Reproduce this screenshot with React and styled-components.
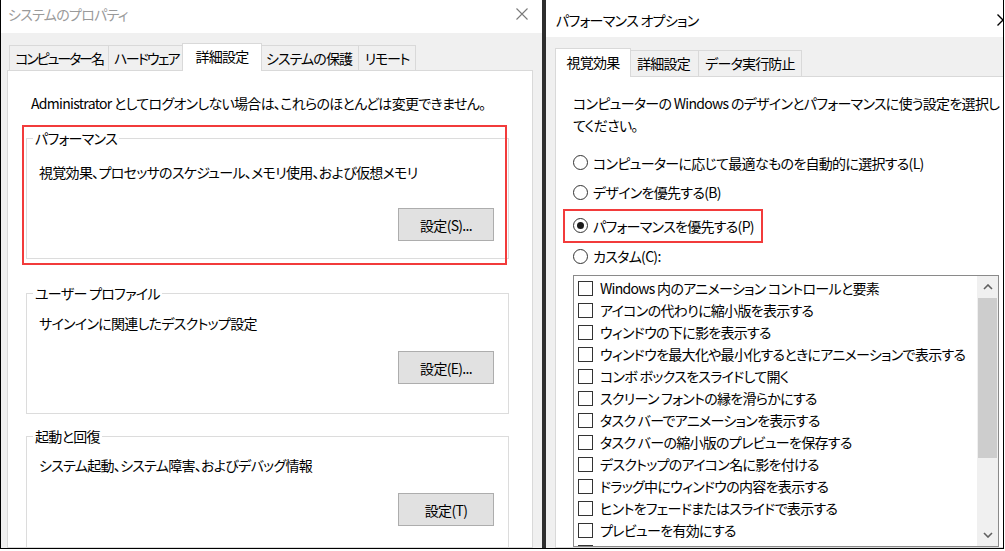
import React from 'react';
import styled, { createGlobalStyle } from 'styled-components';

const Global = createGlobalStyle`
  html, body { margin: 0; padding: 0; background: #fff; }
  body {
    font-family: "Noto Sans CJK JP", sans-serif;
    font-size: 14px;
    letter-spacing: -0.7px;
    color: #000;
    font-feature-settings: "palt";
  }
  #root { width: 1005px; height: 551px; overflow: hidden; }
  * { box-sizing: border-box; }
`;

const Screen = styled.div`
  width: 1005px;
  height: 551px;
  background: #fff;
`;

const Frame = styled.div`
  display: flex;
  width: 1004px;
  height: 549px;
  border-left: 1px solid #000;
  border-right: 1px solid #000;
  border-bottom: 1px solid #000;
  overflow: hidden;
`;

const Window = styled.div`
  display: flex;
  flex-direction: column;
  width: ${p => p.$w}px;
  flex-shrink: 0;
  height: 100%;
  background: #f0f0f0;
  overflow: hidden;
`;

const Divider = styled.div`
  width: 4px;
  flex-shrink: 0;
  background: #2e2e2e;
`;

const TitleBar = styled.div`
  height: ${p => p.$h}px;
  flex-shrink: 0;
  background: #fff;
  display: flex;
  align-items: flex-start;
  justify-content: space-between;
  padding: ${p => p.$pt}px ${p => p.$pr}px 0 ${p => p.$pl}px;
`;

const Title = styled.div`
  font-size: 14px;
  line-height: 20px;
  color: ${p => (p.$inactive ? '#9a9a9a' : '#000')};
`;

const CloseBox = styled.div`
  width: 20px;
  height: 20px;
  margin-right: ${p => p.$mr || 0}px;
  display: flex;
  align-items: center;
  justify-content: center;
  flex-shrink: 0;
`;

const Body = styled.div`
  flex: 1;
  display: flex;
  flex-direction: column;
  padding: ${p => p.$pt}px 0 0 ${p => p.$pl}px;
  min-height: 0;
`;

const TabRow = styled.div`
  display: flex;
  align-items: flex-end;
  height: ${p => p.$h}px;
  flex-shrink: 0;
  padding-left: ${p => p.$pl || 0}px;
`;

const Tab = styled.div`
  position: relative;
  width: ${p => p.$w}px;
  height: ${p => (p.$active ? p.$h + 3 : p.$h)}px;
  line-height: ${p => (p.$active ? p.$h : p.$h - 1)}px;
  text-align: center;
  margin-left: ${p => p.$ml}px;
  margin-bottom: ${p => (p.$active ? -1 : 0)}px;
  background: ${p => (p.$active ? '#fff' : '#f0f0f0')};
  border: 1px solid #d9d9d9;
  border-bottom: none;
  z-index: ${p => (p.$active ? 2 : 1)};
  white-space: nowrap;
  font-size: 14px;
  letter-spacing: ${p => p.$ls}px;
  flex-shrink: 0;
`;

const Panel = styled.div`
  flex: 1;
  width: ${p => p.$w}px;
  flex-shrink: 0;
  background: #fff;
  border: 1px solid #d9d9d9;
  padding: ${p => p.$pt}px 0 0 ${p => p.$pl}px;
  display: flex;
  flex-direction: column;
  min-height: 0;
  overflow: hidden;
`;

const Para = styled.p`
  margin: 0;
  padding-left: ${p => p.$pl || 0}px;
  line-height: 22px;
  white-space: nowrap;
`;

const GroupWrap = styled.div`
  position: relative;
  margin-top: ${p => p.$mt}px;
  width: 483px;
  flex-shrink: 0;
`;

const Group = styled.fieldset`
  margin: 0;
  width: 483px;
  border: 1px solid #dcdcdc;
  padding: ${p => p.$pt}px 14px ${p => p.$pb}px 12px;
  min-width: 0;
`;

const Legend = styled.legend`
  margin-left: -6px;
  padding: 0 2px;
  line-height: 22px;
  font-size: 14px;
`;

const ButtonRow = styled.div`
  display: flex;
  justify-content: flex-end;
  margin-top: ${p => p.$mt}px;
`;

const Button = styled.div`
  width: 96px;
  height: 33px;
  background: #e1e1e1;
  border: 1px solid #adadad;
  display: flex;
  align-items: center;
  justify-content: center;
  font-size: 14px;
`;

const Annotation = styled.div`
  position: absolute;
  left: ${p => p.$l}px;
  top: ${p => p.$t}px;
  width: ${p => p.$w}px;
  height: ${p => p.$h}px;
  border: 2px solid #f23b3b;
  pointer-events: none;
`;

const RadioRow = styled.div`
  position: relative;
  display: flex;
  align-items: center;
  gap: 5px;
  height: 22px;
  margin-top: ${p => p.$mt}px;
  white-space: nowrap;
`;

const RadioCircle = styled.span`
  width: 15px;
  height: 15px;
  border-radius: 50%;
  border: 1px solid #333;
  background: #fff;
  display: flex;
  align-items: center;
  justify-content: center;
  flex-shrink: 0;
  &::after {
    content: '';
    width: 7px;
    height: 7px;
    border-radius: 50%;
    background: ${p => (p.$checked ? '#1a1a1a' : 'transparent')};
  }
`;

const ListBox = styled.div`
  margin-top: ${p => p.$mt}px;
  width: 426px;
  height: 272px;
  flex-shrink: 0;
  border: 1px solid #8a8a8a;
  background: #fff;
  display: flex;
`;

const List = styled.div`
  flex: 1;
  padding: 1px 0 0 4px;
  overflow: hidden;
`;

const CheckRow = styled.div`
  display: flex;
  align-items: center;
  gap: 7px;
  height: 22px;
  white-space: nowrap;
`;

const CheckBox = styled.span`
  width: 15px;
  height: 15px;
  border: 1px solid #333;
  background: #fff;
  flex-shrink: 0;
`;

const ScrollBar = styled.div`
  width: 21px;
  background: #f0f0f0;
  display: flex;
  flex-direction: column;
`;

const ScrollBtn = styled.div`
  height: 22px;
  display: flex;
  align-items: center;
  justify-content: center;
  flex-shrink: 0;
`;

const Thumb = styled.div`
  height: 160px;
  margin: 0 1px;
  background: #cdcdcd;
  flex-shrink: 0;
`;

const Spacer = styled.div`
  flex: 1;
`;

const CloseIcon = ({ color, sw }) => (
  <svg width="12" height="12" viewBox="0 0 12 12">
    <path d="M0.5 0.5 L11.5 11.5 M11.5 0.5 L0.5 11.5" stroke={color} strokeWidth={sw} fill="none" />
  </svg>
);

const Chevron = ({ up }) => (
  <svg width="10" height="6" viewBox="0 0 10 6">
    <path
      d={up ? 'M1 5 L5 1 L9 5' : 'M1 1 L5 5 L9 1'}
      stroke="#606060"
      strokeWidth="1.6"
      fill="none"
    />
  </svg>
);

const leftTabs = [
  { label: 'コンピューター名', w: 100, ls: -2.1 },
  { label: 'ハードウェア', w: 77, ls: -1.8 },
  { label: '詳細設定', w: 76, ls: -0.7 },
  { label: 'システムの保護', w: 100, ls: -0.9 },
  { label: 'リモート', w: 58, ls: -1.2 },
];
const rightTabs = [
  { label: '視覚効果', w: 76, ls: -0.7 },
  { label: '詳細設定', w: 71, ls: -0.7 },
  { label: 'データ実行防止', w: 104, ls: -0.8 },
];

const TabStrip = ({ tabs, active, h, rowH, pl }) => (
  <TabRow $h={rowH} $pl={pl}>
    {tabs.map((t, i) => {
      const isActive = i === active;
      const first = i === 0;
      let ml = -1;
      if (first) ml = 0;
      else if (isActive || i - 1 === active) ml = -3;
      const w = isActive && !first ? t.w + 4 : t.w;
      return (
        <Tab key={t.label} $w={w} $h={h} $ml={ml} $ls={t.ls} $active={isActive}>
          {t.label}
        </Tab>
      );
    })}
  </TabRow>
);

const effects = [
  'Windows 内のアニメーション コントロールと要素',
  'アイコンの代わりに縮小版を表示する',
  'ウィンドウの下に影を表示する',
  'ウィンドウを最大化や最小化するときにアニメーションで表示する',
  'コンボ ボックスをスライドして開く',
  'スクリーン フォントの縁を滑らかにする',
  'タスク バーでアニメーションを表示する',
  'タスク バーの縮小版のプレビューを保存する',
  'デスクトップのアイコン名に影を付ける',
  'ドラッグ中にウィンドウの内容を表示する',
  'ヒントをフェードまたはスライドで表示する',
  'プレビューを有効にする',
  'マウス ポインターの下に影を表示する',
];

const groups = [
  {
    legend: 'パフォーマンス',
    desc: '視覚効果、プロセッサのスケジュール、メモリ使用、および仮想メモリ',
    button: '設定(S)...',
    mt: 13, pt: 12, btnMt: 25, pb: 17, mark: true,
  },
  {
    legend: 'ユーザー プロファイル',
    desc: 'サインインに関連したデスクトップ設定',
    button: '設定(E)...',
    mt: 23, pt: 8, btnMt: 17, pb: 29,
  },
  {
    legend: '起動と回復',
    desc: 'システム起動、システム障害、およびデバッグ情報',
    button: '設定(T)',
    mt: 11, pt: 7, btnMt: 17, pb: 40,
  },
];

const radios = [
  { label: 'コンピューターに応じて最適なものを自動的に選択する(L)', mt: 16 },
  { label: 'デザインを優先する(B)', mt: 8 },
  { label: 'パフォーマンスを優先する(P)', mt: 12, checked: true, mark: true },
  { label: 'カスタム(C):', mt: 9 },
];

export default function App() {
  return (
    <Screen>
      <Global />
      <Frame>
        <Window $w={541}>
          <TitleBar $h={33} $pt={4} $pl={7} $pr={10}>
            <Title $inactive>システムのプロパティ</Title>
            <CloseBox>
              <CloseIcon color="#7a7a7a" sw={1.1} />
            </CloseBox>
          </TitleBar>
          <Body $pt={10} $pl={6}>
            <TabStrip tabs={leftTabs} active={2} h={25} rowH={27} pl={2} />
            <Panel $w={526} $pt={21} $pl={18}>
              <Para $pl={5}>
                Administrator としてログオンしない場合は、これらのほとんどは変更できません。
              </Para>
              {groups.map(g => (
                <GroupWrap key={g.legend} $mt={g.mt}>
                  <Group $pt={g.pt} $pb={g.pb}>
                    <Legend>{g.legend}</Legend>
                    <Para>{g.desc}</Para>
                    <ButtonRow $mt={g.btnMt}>
                      <Button>{g.button}</Button>
                    </ButtonRow>
                  </Group>
                  {g.mark && <Annotation $l={-4} $t={-2} $w={485} $h={140} />}
                </GroupWrap>
              ))}
            </Panel>
          </Body>
        </Window>
        <Divider />
        <Window $w={457}>
          <TitleBar $h={37} $pt={10} $pl={10} $pr={0}>
            <Title>パフォーマンス オプション</Title>
            <CloseBox $mr={-10}>
              <CloseIcon color="#000" sw={1.4} />
            </CloseBox>
          </TitleBar>
          <Body $pt={11} $pl={9}>
            <TabStrip tabs={rightTabs} active={0} h={26} rowH={28} pl={0} />
            <Panel $w={470} $pt={15} $pl={17}>
              <Para>
                コンピューターの Windows のデザインとパフォーマンスに使う設定を選択し
                <br />
                てください。
              </Para>
              {radios.map(r => (
                <RadioRow key={r.label} $mt={r.mt}>
                  <RadioCircle $checked={r.checked} />
                  <span>{r.label}</span>
                  {r.mark && <Annotation $l={-10} $t={-6} $w={200} $h={34} />}
                </RadioRow>
              ))}
              <ListBox $mt={8}>
                <List>
                  {effects.map(e => (
                    <CheckRow key={e}>
                      <CheckBox />
                      <span>{e}</span>
                    </CheckRow>
                  ))}
                </List>
                <ScrollBar>
                  <ScrollBtn>
                    <Chevron up />
                  </ScrollBtn>
                  <Thumb />
                  <Spacer />
                  <ScrollBtn>
                    <Chevron />
                  </ScrollBtn>
                </ScrollBar>
              </ListBox>
            </Panel>
          </Body>
        </Window>
      </Frame>
    </Screen>
  );
}
